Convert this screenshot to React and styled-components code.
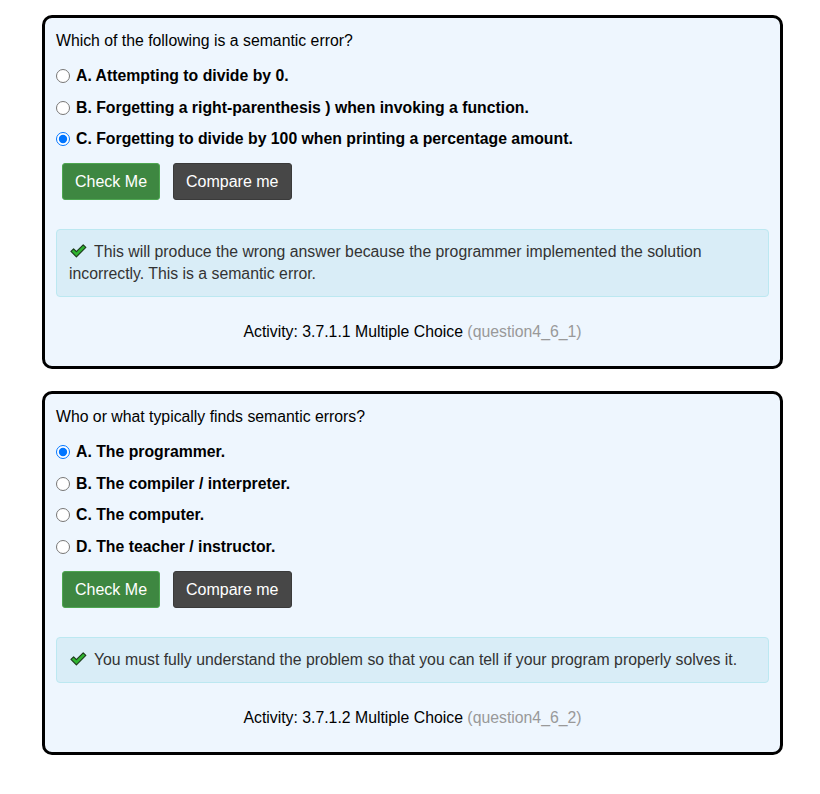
import React from "react";
import styled, { createGlobalStyle } from "styled-components";

const GlobalStyle = createGlobalStyle`
  body {
    margin: 0;
    background: #fff;
    font-family: "Liberation Sans", Arial, sans-serif;
    font-size: 15.8px;
    color: #000;
  }
`;

const questions = [
  {
    prompt: "Which of the following is a semantic error?",
    options: [
      "A. Attempting to divide by 0.",
      "B. Forgetting a right-parenthesis ) when invoking a function.",
      "C. Forgetting to divide by 100 when printing a percentage amount.",
    ],
    picked: 2,
    feedback:
      "This will produce the wrong answer because the programmer implemented the solution incorrectly. This is a semantic error.",
    activity: "3.7.1.1",
    id: "question4_6_1",
  },
  {
    prompt: "Who or what typically finds semantic errors?",
    options: [
      "A. The programmer.",
      "B. The compiler / interpreter.",
      "C. The computer.",
      "D. The teacher / instructor.",
    ],
    picked: 0,
    feedback:
      "You must fully understand the problem so that you can tell if your program properly solves it.",
    activity: "3.7.1.2",
    id: "question4_6_2",
  },
];

function CheckIcon() {
  return (
    <svg width="17" height="14" viewBox="0 0 17 14" className="ok-icon">
      <path
        d="M1 7.4 L3.6 4.8 L6.4 7.6 L13.2 0.8 L15.8 3.4 L6.4 12.8 Z"
        fill="#2fb52f"
        stroke="#1d3d1d"
        strokeWidth="1.2"
        strokeLinejoin="round"
      />
    </svg>
  );
}

function QuestionCard({ q, name }) {
  return (
    <Card>
      <Prompt>{q.prompt}</Prompt>
      <OptionList>
        {q.options.map((opt, i) => (
          <Option key={i}>
            <input type="radio" name={name} defaultChecked={i === q.picked} />
            <span>{opt}</span>
          </Option>
        ))}
      </OptionList>
      <ButtonRow>
        <Button $kind="success">Check Me</Button>
        <Button $kind="dark">Compare me</Button>
      </ButtonRow>
      <Feedback>
        <CheckIcon />
        {q.feedback}
      </Feedback>
      <Activity>
        Activity: {q.activity} Multiple Choice <span>({q.id})</span>
      </Activity>
    </Card>
  );
}

export default function App() {
  return (
    <>
      <GlobalStyle />
      <Page>
        {questions.map((q, i) => (
          <QuestionCard key={q.id} q={q} name={"q" + i} />
        ))}
      </Page>
    </>
  );
}

const Page = styled.div`
  padding: 15px 37px 20px 42px;
  display: flex;
  flex-direction: column;
  gap: 22px;
`;

const Card = styled.div`
  border: 3px solid #000;
  border-radius: 10px;
  background: #eef6fe;
  padding: 13px 11px 24px 11px;
`;

const Prompt = styled.div`
  line-height: 20px;
`;

const OptionList = styled.div`
  margin-top: 9px;
  display: flex;
  flex-direction: column;
`;

const Option = styled.label`
  height: 31.7px;
  display: flex;
  align-items: center;
  font-weight: bold;

  input {
    width: 14px;
    height: 14px;
    margin: 0 6px 0 0;
  }
`;

const ButtonRow = styled.div`
  display: flex;
  gap: 13px;
  margin: 8px 0 0 6px;
`;

const Button = styled.button`
  font-family: "Liberation Sans", Arial, sans-serif;
  font-size: 16px;
  line-height: 23px;
  padding: 6px 12px;
  border-radius: 3px;
  color: #fff;
  cursor: pointer;
  background: ${({ $kind }) => ($kind === "success" ? "#3e8741" : "#474747")};
  border: 1px solid ${({ $kind }) => ($kind === "success" ? "#4ea651" : "#3a3a3a")};
`;

const Feedback = styled.div`
  margin-top: 29px;
  background: #d9edf7;
  border: 1px solid #bce8f1;
  border-radius: 4px;
  padding: 11px 12px;
  line-height: 22px;
  color: #333;

  .ok-icon {
    vertical-align: -1px;
    margin: 0 7px 0 1px;
  }
`;

const Activity = styled.div`
  margin-top: 25px;
  text-align: center;
  line-height: 20px;

  span {
    color: #999;
  }
`;
